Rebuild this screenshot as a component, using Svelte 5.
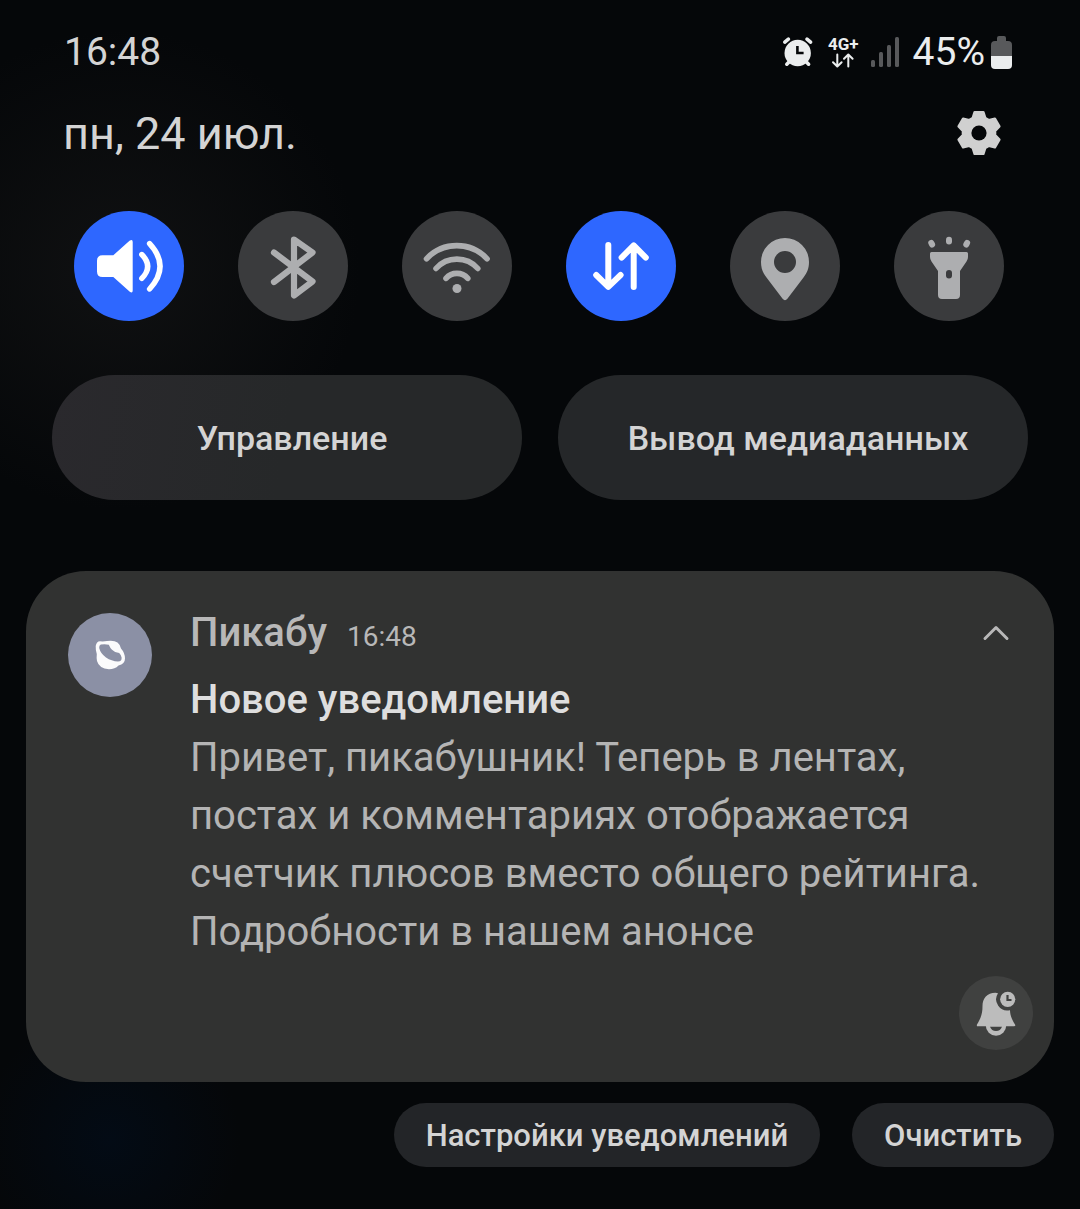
<script lang="ts">
    type Toggle = { id: string; label: string; on: boolean };

    let toggles = $state<Toggle[]>([
        { id: "sound", label: "Звук", on: true },
        { id: "bluetooth", label: "Bluetooth", on: false },
        { id: "wifi", label: "Wi-Fi", on: false },
        { id: "data", label: "Мобильные данные", on: true },
        { id: "location", label: "Геолокация", on: false },
        { id: "torch", label: "Фонарик", on: false },
    ]);

    let expanded = $state(true);

    // Six teeth, four corners each: [degrees from tooth axis, radius]
    const tooth = [
        [-23, 16.2],
        [-12, 21.4],
        [12, 21.4],
        [23, 16.2],
    ];
    const gearPoints = [0, 60, 120, 180, 240, 300]
        .flatMap((base) =>
            tooth.map(([deg, r]) => {
                const a = ((base + deg) * Math.PI) / 180;
                return `${(23 + r * Math.sin(a)).toFixed(1)},${(23 - r * Math.cos(a)).toFixed(1)}`;
            }),
        )
        .join(" ");
</script>

<main class="shade">
    <header class="status-bar">
        <time class="clock">16:48</time>
        <div class="indicators">
            <svg class="alarm" viewBox="0 0 32 32" aria-hidden="true">
                <g fill="none" stroke="#ebedee" stroke-width="3.6" stroke-linecap="round">
                    <path d="M2.8 6.2 6.4 3.2M25 3.2l3.6 3M8 25l-3.2 3.2M23.4 25l3.2 3.2" />
                </g>
                <circle cx="15.7" cy="17" r="13.2" fill="#ebedee" />
                <path d="M15.4 10v7h6.2" fill="none" stroke="#050709" stroke-width="2.6" />
            </svg>
            <div class="network">
                <span>4G+</span>
                <svg viewBox="0 0 24 15" aria-hidden="true">
                    <path d="M6.3 1.5V13M2 9.2l4.3 4.3 4.3-4.3M17.3 13.5V2M13 5.8l4.3-4.3 4.3 4.3" />
                </svg>
            </div>
            <svg class="signal" viewBox="0 0 28 30" aria-hidden="true">
                <rect x="0" y="23" width="4" height="7" rx="1.5" />
                <rect x="8" y="15" width="4" height="15" rx="1.5" />
                <rect x="16" y="8" width="4" height="22" rx="1.5" />
                <rect x="24" y="0" width="4" height="30" rx="1.5" />
            </svg>
            <span class="percent">45%</span>
            <svg class="battery" viewBox="0 0 21 33" aria-hidden="true">
                <path d="M6 5V2q0-2 2-2h5q2 0 2 2v3h2q4 0 4 4v11H0V9q0-4 4-4z" fill="#58595b" />
                <path d="M0 20h21v9q0 4-4 4H4q-4 0-4-4z" fill="#ebedee" />
            </svg>
        </div>
    </header>

    <div class="date-row">
        <h1>пн, 24 июл.</h1>
        <button class="gear" aria-label="Настройки">
            <svg viewBox="0 0 46 46">
                <polygon points={gearPoints} fill="#d0d0d0" stroke="#d0d0d0" stroke-width="2.4" stroke-linejoin="round" />
                <circle cx="23" cy="23" r="7.6" fill="#050709" />
            </svg>
        </button>
    </div>

    <div class="toggles">
        {#each toggles as toggle (toggle.id)}
            <button
                class="toggle"
                class:on={toggle.on}
                aria-label={toggle.label}
                aria-pressed={toggle.on}
                onclick={() => (toggle.on = !toggle.on)}
            >
                <svg viewBox="0 0 110 110">
                    {#if toggle.id === "sound"}
                        <path
                            class="solid"
                            d="M28.500 44.300H39.300L55.500 29.800Q58.700 27.600 58.700 31V79.500Q58.700 83 55.500 80.600L39.300 66H28.500Q23 66 23 60.500V49.800Q23 44.300 28.500 44.300Z"
                        />
                        <path class="line" stroke-width="5.400" d="M67.800 43.500Q79.600 55.300 67.800 67.400M75.600 32.600Q96.500 55.300 75.600 78" />
                    {:else if toggle.id === "bluetooth"}
                        <path class="line" stroke-width="6.200" d="M36 41.500 74.500 70.500 56 84.500V28.500L74.500 41.500 36 71" />
                    {:else if toggle.id === "wifi"}
                        <path
                            class="line"
                            stroke-width="5.600"
                            d="M24.500 47.800A41.400 41.400 0 0 1 85.100 47.800M34 57.500A28 28 0 0 1 75.800 57.500M44 67.400A14.400 14.400 0 0 1 65.800 67.400"
                        />
                        <circle class="solid" cx="55" cy="77.500" r="4.500" />
                    {:else if toggle.id === "data"}
                        <path
                            class="line"
                            stroke-width="6"
                            d="M42.300 34V75.600M30.200 64 42.300 75.800 54.600 64M67.700 76V34.400M55.600 46.600 67.700 34.400 79.800 46.600"
                        />
                    {:else if toggle.id === "location"}
                        <path
                            class="solid"
                            fill-rule="evenodd"
                            d="M55 27A24 24 0 0 1 79 51C79 57.500 77 62 73.500 66.500L57.400 87.800Q55 90.500 52.600 87.800L36.500 66.500C33 62 31 57.500 31 51A24 24 0 0 1 55 27ZM55 40A11 11 0 1 0 55 62A11 11 0 1 0 55 40Z"
                        />
                    {:else}
                        <path
                            class="solid"
                            fill-rule="evenodd"
                            d="M37.500 41H72.500Q74 41 74 42.500V46Q74 48.500 72.500 50.500L66 60V84Q66 88 62 88H48Q44 88 44 84V60L37.500 50.500Q36 48.500 36 46V42.500Q36 41 37.500 41ZM52 62V64.500A3 3 0 0 0 58 64.500V62A3 3 0 0 0 52 62Z"
                        />
                        <rect class="solid" x="52" y="25.800" width="6" height="7.800" rx="3" />
                        <rect class="solid" x="34.700" y="28.800" width="6" height="7.800" rx="3" transform="rotate(-28 37.700 32.700)" />
                        <rect class="solid" x="69.700" y="28.800" width="6" height="7.800" rx="3" transform="rotate(28 72.700 32.700)" />
                    {/if}
                </svg>
            </button>
        {/each}
    </div>

    <div class="panels">
        <button>Управление</button>
        <button>Вывод медиаданных</button>
    </div>

    <article class="card">
        <div class="avatar">
            <svg viewBox="0 0 84 84" aria-hidden="true">
                <path
                    fill="#fbfbfc"
                    fill-rule="evenodd"
                    d="M32 28.300Q36 28.600 39 28Q46 27 49.500 29.500Q52.500 32 53 35.500Q57 40 57 45.500Q57 51 50.500 52.500Q47 56.300 41 56.300Q31 55.500 29 48Q28.400 44.500 28.800 41Q27.500 37.500 27.700 33Q28.500 28.500 32 28.300ZM32.800 31.600Q31 32.200 31.200 35Q32.500 40.500 38 44.500Q43.500 48.200 50 48.600Q54 48.600 53.600 44.500Q53 41.500 51.200 40Q46.500 39.600 44 36.800Q42 34.800 40.800 31.800Q37 30.800 32.800 31.600Z"
                />
            </svg>
        </div>

        <div class="content">
            <div class="card-head">
                <span class="app">Пикабу</span>
                <time>16:48</time>
                <button
                    class="collapse"
                    class:closed={!expanded}
                    aria-label="Свернуть"
                    aria-expanded={expanded}
                    onclick={() => (expanded = !expanded)}
                >
                    <svg viewBox="0 0 30 20"><path d="M4 15.500 15 4.500 26 15.500" /></svg>
                </button>
            </div>
            <h2>Новое уведомление</h2>
            {#if expanded}
                <p>
                    Привет, пикабушник! Теперь в лентах, постах и комментариях отображается счетчик плюсов
                    вместо общего рейтинга. Подробности в нашем анонсе
                </p>
            {/if}
        </div>

        <button class="snooze" aria-label="Отложить">
            <svg viewBox="0 0 74 74">
                <circle cx="37" cy="49.500" r="10.200" fill="#bcbcbc" />
                <path
                    d="M36.500 16.700C28 16.700 23.500 22.500 23.500 30C23.500 38 22 41.500 18 48.500Q17.300 50.300 19 50.300H55Q57 50.300 56 48.500C52.500 43 51.200 39 51 34.200A11.200 11.200 0 0 1 39 17.200Z"
                    fill="#bcbcbc"
                />
                <path d="M31 50.800H43Q41.500 55 37 55Q32.500 55 31 50.800Z" fill="#404140" />
                <circle cx="48.700" cy="23.300" r="7.600" fill="#bcbcbc" />
                <path d="M48.500 19V24H52.500" fill="none" stroke="#404140" stroke-width="2.200" />
            </svg>
        </button>
    </article>

    <footer>
        <button>Настройки уведомлений</button>
        <button>Очистить</button>
    </footer>
</main>

<style>
    :global(body) {
        background: #050709;
    }

    .shade {
        min-height: 100vh;
        box-sizing: border-box;
        padding: 28px 26px 42px;
        font-family: Roboto, "Noto Sans", sans-serif;
        color: #d4d4d4;
        background:
            radial-gradient(circle at 110px 1140px, #030b15 0, transparent 130px),
            radial-gradient(circle at 120px 270px, #101112 0, transparent 240px),
            #050709;
    }

    button {
        border: none;
        padding: 0;
        font: inherit;
        color: inherit;
        background: none;
        cursor: pointer;
    }

    svg {
        display: block;
    }

    /* Status bar */
    .status-bar,
    .date-row {
        display: flex;
        align-items: center;
        justify-content: space-between;
        height: 48px;
    }

    .status-bar {
        padding: 0 42px 0 38px;
        font-size: 39px;
    }

    .indicators {
        display: flex;
        align-items: center;
        color: #ebedee;
    }

    .alarm {
        width: 32px;
        height: 32px;
        margin-right: 14px;
    }

    .network {
        display: flex;
        flex-direction: column;
        align-items: center;
        margin-right: 12px;
        font-size: 17px;
        font-weight: 700;
        line-height: 17px;
    }

    .network svg {
        width: 24px;
        height: 15px;
        fill: none;
        stroke: #ebedee;
        stroke-width: 2;
        stroke-linecap: round;
        stroke-linejoin: round;
    }

    .signal {
        width: 28px;
        height: 30px;
        margin-right: 14px;
        fill: #58595b;
    }

    .percent {
        margin-right: 6px;
    }

    .battery {
        width: 21px;
        height: 33px;
    }

    /* Date and settings */
    .date-row {
        margin-top: 33px;
        padding: 0 52px 0 37px;
    }

    h1 {
        margin: 0;
        font-size: 45px;
        font-weight: 400;
    }

    .gear svg {
        width: 46px;
        height: 46px;
    }

    /* Quick toggles */
    .toggles {
        display: flex;
        justify-content: space-between;
        margin-top: 54px;
        padding: 0 50px 0 48px;
    }

    .toggle {
        width: 110px;
        height: 110px;
        border-radius: 50%;
        background: #3a3b3d;
        color: #adaeb0;
    }

    .toggle.on {
        background: #2e67ff;
        color: #ffffff;
    }

    .solid {
        fill: currentColor;
    }

    .line {
        fill: none;
        stroke: currentColor;
        stroke-linecap: round;
        stroke-linejoin: round;
    }

    .panels {
        display: grid;
        grid-template-columns: 1fr 1fr;
        gap: 36px;
        margin-top: 54px;
        padding: 0 26px;
    }

    .panels button {
        height: 125px;
        padding-left: 10px;
        border-radius: 63px;
        background: #252729;
        font-size: 34px;
        font-weight: 500;
    }

    .panels button:first-child {
        background: linear-gradient(100deg, #2a292d, #262829 50%);
    }

    /* Notification */
    .card {
        display: grid;
        grid-template-columns: 84px 1fr;
        column-gap: 38px;
        margin-top: 71px;
        padding: 42px 21px 32px 42px;
        border-radius: 60px;
        background: #313231;
    }

    .avatar {
        width: 84px;
        height: 84px;
        border-radius: 50%;
        background: #8b90a5;
    }

    .card-head {
        display: flex;
        align-items: baseline;
        height: 40px;
        margin-bottom: 18px;
        line-height: 40px;
        color: #b8b8b8;
    }

    .app {
        margin-right: 20px;
        font-size: 40px;
        font-weight: 500;
    }

    .card-head time {
        font-size: 28px;
    }

    .collapse {
        align-self: center;
        margin-left: auto;
        margin-right: 22px;
    }

    .collapse.closed {
        transform: rotate(180deg);
    }

    .collapse svg {
        width: 30px;
        height: 20px;
        fill: none;
        stroke: #b8b8b8;
        stroke-width: 3;
        stroke-linecap: round;
        stroke-linejoin: round;
    }

    h2,
    p {
        margin: 0;
        font-size: 40px;
        line-height: 58px;
    }

    h2 {
        font-weight: 500;
        color: #dedede;
    }

    p {
        padding-right: 36px;
        color: #b4b4b4;
    }

    .snooze {
        grid-column: 2;
        justify-self: end;
        width: 74px;
        height: 74px;
        margin-top: 15px;
        border-radius: 50%;
        background: #404140;
    }

    /* Footer actions */
    footer {
        display: flex;
        justify-content: flex-end;
        gap: 32px;
        margin-top: 21px;
    }

    footer button {
        height: 64px;
        padding: 0 32px;
        border-radius: 32px;
        background: #232528;
        font-size: 31px;
        font-weight: 500;
    }
</style>
